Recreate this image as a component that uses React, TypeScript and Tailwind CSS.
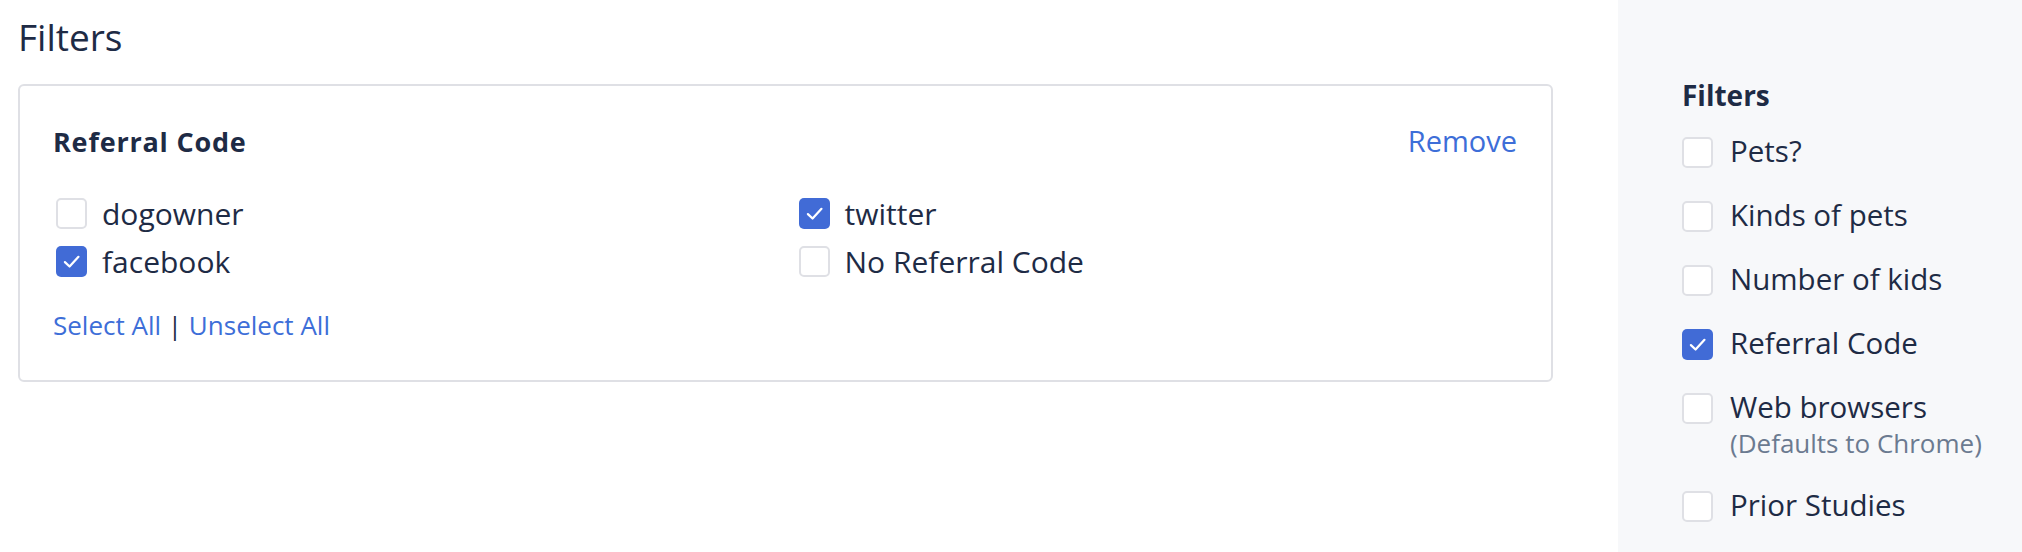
import React from 'react';

const font = { fontFamily: '"Open Sans", "Liberation Sans", sans-serif' };

const Checkbox: React.FC<{ checked?: boolean }> = ({ checked }) =>
  checked ? (
    <span className="flex h-[31px] w-[31px] shrink-0 items-center justify-center rounded-[5px] bg-[#416bd6]">
      <svg viewBox="0 0 16 16" className="h-[31px] w-[31px]" fill="none">
        <path d="M4.6 8.3 L7 10.6 L11.6 5.6" stroke="#fff" strokeWidth="1.15" strokeLinecap="round" strokeLinejoin="round" />
      </svg>
    </span>
  ) : (
    <span className="h-[31px] w-[31px] shrink-0 rounded-[5px] border-2 border-[#dfe0e5] bg-white" />
  );

const Option: React.FC<{ label: string; checked?: boolean }> = ({ label, checked }) => (
  <label className="flex items-center gap-[15px]">
    <Checkbox checked={checked} />
    <span className="text-[30px] leading-[31px] text-[#1e2b45]">{label}</span>
  </label>
);

const sideItems = [
  { label: 'Pets?' },
  { label: 'Kinds of pets' },
  { label: 'Number of kids' },
  { label: 'Referral Code', checked: true },
  { label: 'Web browsers', note: '(Defaults to Chrome)' },
  { label: 'Prior Studies' },
];

export default function App() {
  return (
    <div className="flex h-[552px] w-[2022px] bg-white" style={font}>
      {/* main column */}
      <main className="flex-1 pl-[18px] pr-[65px] pt-[14px]">
        <h1 className="mb-[25px] text-[37px] leading-[45px] text-[#1e2b45]">Filters</h1>

        <section className="rounded-[6px] border-2 border-[#dfe0e5] pl-[36px] pr-[34px] pt-[37px] pb-[37px]">
          <div className="flex items-baseline justify-between">
            <h2 className="-ml-[3px] text-[27px] font-bold leading-[36px] tracking-[0.8px] text-[#1e2b45]">Referral Code</h2>
            <a href="#" className="text-[29px] leading-[36px] text-[#3d6ed8]">Remove</a>
          </div>

          <div className="mt-[38px] grid grid-cols-2 gap-x-6 gap-y-[17px]">
            <Option label="dogowner" />
            <Option label="twitter" checked />
            <Option label="facebook" checked />
            <Option label="No Referral Code" />
          </div>

          <div className="-ml-[3px] mt-[30px] text-[26px] leading-[36px] text-[#3d6ed8]">
            <a href="#">Select All</a>
            <span className="text-[#1e2b45]"> | </span>
            <a href="#">Unselect All</a>
          </div>
        </section>
      </main>

      {/* sidebar */}
      <aside className="w-[404px] bg-[#f7f8fa] pl-[64px] pt-[77px]">
        <h3 className="mb-[24px] text-[28px] font-bold leading-[36px] text-[#1e2b45]">Filters</h3>
        <ul className="flex flex-col gap-[33px]">
          {sideItems.map((item) => (
            <li key={item.label} className="flex items-start gap-[17px]">
              <Checkbox checked={item.checked} />
              <div>
                <div className="text-[29.5px] leading-[28px] text-[#1e2b45]">{item.label}</div>
                {item.note && (
                  <div className="mt-[7px] text-[26px] leading-[30px] text-[#6b7a90]">{item.note}</div>
                )}
              </div>
            </li>
          ))}
        </ul>
      </aside>
    </div>
  );
}
